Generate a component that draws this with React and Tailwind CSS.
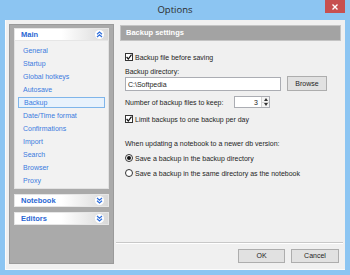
import React from "react";

const F = { fontFamily: '"Liberation Sans", Arial, sans-serif' };

function Chevrons({ up }) {
  return (
    <span className="w-[9px] h-[9px] rounded-full bg-white flex items-center justify-center">
      <svg width="7" height="7" viewBox="0 0 7 7">
        {up ? (
          <g fill="none" stroke="#2f6fdc" strokeWidth="1.2">
            <polyline points="1,3.2 3.5,1 6,3.2" />
            <polyline points="1,6 3.5,3.8 6,6" />
          </g>
        ) : (
          <g fill="none" stroke="#2f6fdc" strokeWidth="1.2">
            <polyline points="1,1 3.5,3.2 6,1" />
            <polyline points="1,3.8 3.5,6 6,3.8" />
          </g>
        )}
      </svg>
    </span>
  );
}

function SectionHeader({ title, up }) {
  return (
    <div className="h-[13px] flex items-center justify-between pl-[6px] pr-[4px] bg-gradient-to-r from-white via-white to-[#d9d9d9] border border-[#e6e6e6]">
      <span className="text-[7.5px] font-bold text-[#2a67d4] leading-none">{title}</span>
      <Chevrons up={up} />
    </div>
  );
}

function Check() {
  return (
    <span className="w-[8px] h-[8px] border border-[#333] bg-white flex items-center justify-center shrink-0">
      <svg width="6" height="6" viewBox="0 0 6 6">
        <polyline points="0.6,3 2.3,5 5.5,0.6" fill="none" stroke="#111" strokeWidth="1.2" />
      </svg>
    </span>
  );
}

function Radio({ on }) {
  return (
    <span className="w-[8px] h-[8px] rounded-full border border-[#333] bg-white flex items-center justify-center shrink-0">
      {on && <span className="w-[4px] h-[4px] rounded-full bg-[#111]" />}
    </span>
  );
}

const items = [
  "General",
  "Startup",
  "Global hotkeys",
  "Autosave",
  "Backup",
  "Date/Time format",
  "Confirmations",
  "Import",
  "Search",
  "Browser",
  "Proxy",
];

export default function App() {
  return (
    <div className="w-[350px] h-[275px] bg-[#8cc5f2] flex flex-col overflow-hidden" style={F}>
      {/* title bar */}
      <div className="h-[20px] relative flex items-center justify-center">
        <span className="text-[9.5px] text-[#2b2b2b]" style={{ fontFamily: '"Open Sans", sans-serif' }}>
          Options
        </span>
        <div className="absolute right-[5px] top-0 w-[20px] h-[13px] bg-[#c75050] flex items-center justify-center">
          <svg width="6" height="6" viewBox="0 0 6 6">
            <path d="M0.5 0.5 L5.5 5.5 M5.5 0.5 L0.5 5.5" stroke="#fff" strokeWidth="1.4" />
          </svg>
        </div>
      </div>

      {/* body */}
      <div className="flex-1 mx-[5px] mb-[5px] bg-[#f0f0f0] flex border-l border-b border-[#fbfbfb]">
        {/* left panel */}
        <div className="ml-[3px] mt-[4px] mb-[5px] w-[105px] bg-[#aaaaaa] border border-[#9a9a9a] pt-[3px] px-[4px] flex flex-col gap-[5px]">
          <div className="flex flex-col">
            <SectionHeader title="Main" up />
            <div className="bg-[#f2f2f2] border border-t-0 border-[#e2e2e2] pt-[3px] pb-[1px]">
              {items.map((it) => (
                <div key={it} className="h-[13px] flex items-center px-[3px]">
                  <div
                    className={
                      "w-full h-[11px] flex items-center pl-[5px] text-[7px] leading-none text-[#3b7be0] " +
                      (it === "Backup" ? "bg-[#e8f2fc] border border-[#7fb5ea]" : "")
                    }
                  >
                    {it}
                  </div>
                </div>
              ))}
            </div>
          </div>
          <SectionHeader title="Notebook" />
          <SectionHeader title="Editors" />
        </div>

        {/* right panel */}
        <div className="flex-1 flex flex-col pt-[5px]">
          <div className="ml-[6px] mr-[4px] h-[16px] bg-[#a3a3a3] border border-[#c4c4c4] flex items-center pl-[5px]">
            <span className="text-[7.5px] font-bold text-white leading-none">Backup settings</span>
          </div>

          <div className="pl-[11px] flex flex-col text-[7px] text-[#1e1e1e] leading-none">
            <div className="mt-[11px] h-[10px] flex items-center gap-[2px]">
              <Check />
              <span>Backup file before saving</span>
            </div>
            <div className="mt-[5px] h-[9px] flex items-center">Backup directory:</div>
            <div className="h-[15px] flex items-end">
              <div className="w-[156px] h-[14px] bg-white border border-[#abadb3] flex items-center pl-[2px]">
                C:\Softpedia
              </div>
              <div className="ml-[6px] w-[40px] h-[15px] bg-[#e1e1e1] border border-[#adadad] flex items-center justify-center">
                Browse
              </div>
            </div>
            <div className="mt-[5px] h-[12px] flex items-center">
              <span className="w-[109px]">Number of backup files to keep:</span>
              <div className="w-[36px] h-[12px] bg-white border border-[#abadb3] flex items-center justify-end">
                <span className="pr-[3px]">3</span>
                <div className="w-[8px] h-full flex flex-col border-l border-[#d4d4d4]">
                  <div className="flex-1 flex items-center justify-center border-b border-[#d4d4d4] bg-[#f4f4f4]">
                    <svg width="4" height="3" viewBox="0 0 4 3"><polygon points="0,3 2,0 4,3" fill="#333" /></svg>
                  </div>
                  <div className="flex-1 flex items-center justify-center bg-[#f4f4f4]">
                    <svg width="4" height="3" viewBox="0 0 4 3"><polygon points="0,0 2,3 4,0" fill="#333" /></svg>
                  </div>
                </div>
              </div>
            </div>
            <div className="mt-[6px] h-[10px] flex items-center gap-[2px]">
              <Check />
              <span>Limit backups to one backup per day</span>
            </div>
            <div className="mt-[14px] h-[10px] flex items-center">
              When updating a notebook to a newer db version:
            </div>
            <div className="mt-[5px] h-[10px] flex items-center gap-[2px]">
              <Radio on />
              <span>Save a backup in the backup directory</span>
            </div>
            <div className="mt-[5px] h-[10px] flex items-center gap-[2px]">
              <Radio />
              <span>Save a backup in the same directory as the notebook</span>
            </div>
          </div>

          <div className="flex-1" />
          <div className="ml-[2px] mr-[2px] h-px bg-[#c8c8c8] border-b border-white box-content" />
          <div className="mt-[5px] mb-[6px] flex justify-end gap-[6px] pr-[6px] text-[7px] text-[#1e1e1e]">
            <div className="w-[47px] h-[14px] bg-[#e1e1e1] border border-[#adadad] flex items-center justify-center">OK</div>
            <div className="w-[48px] h-[14px] bg-[#e1e1e1] border border-[#adadad] flex items-center justify-center">Cancel</div>
          </div>
        </div>
      </div>
    </div>
  );
}
